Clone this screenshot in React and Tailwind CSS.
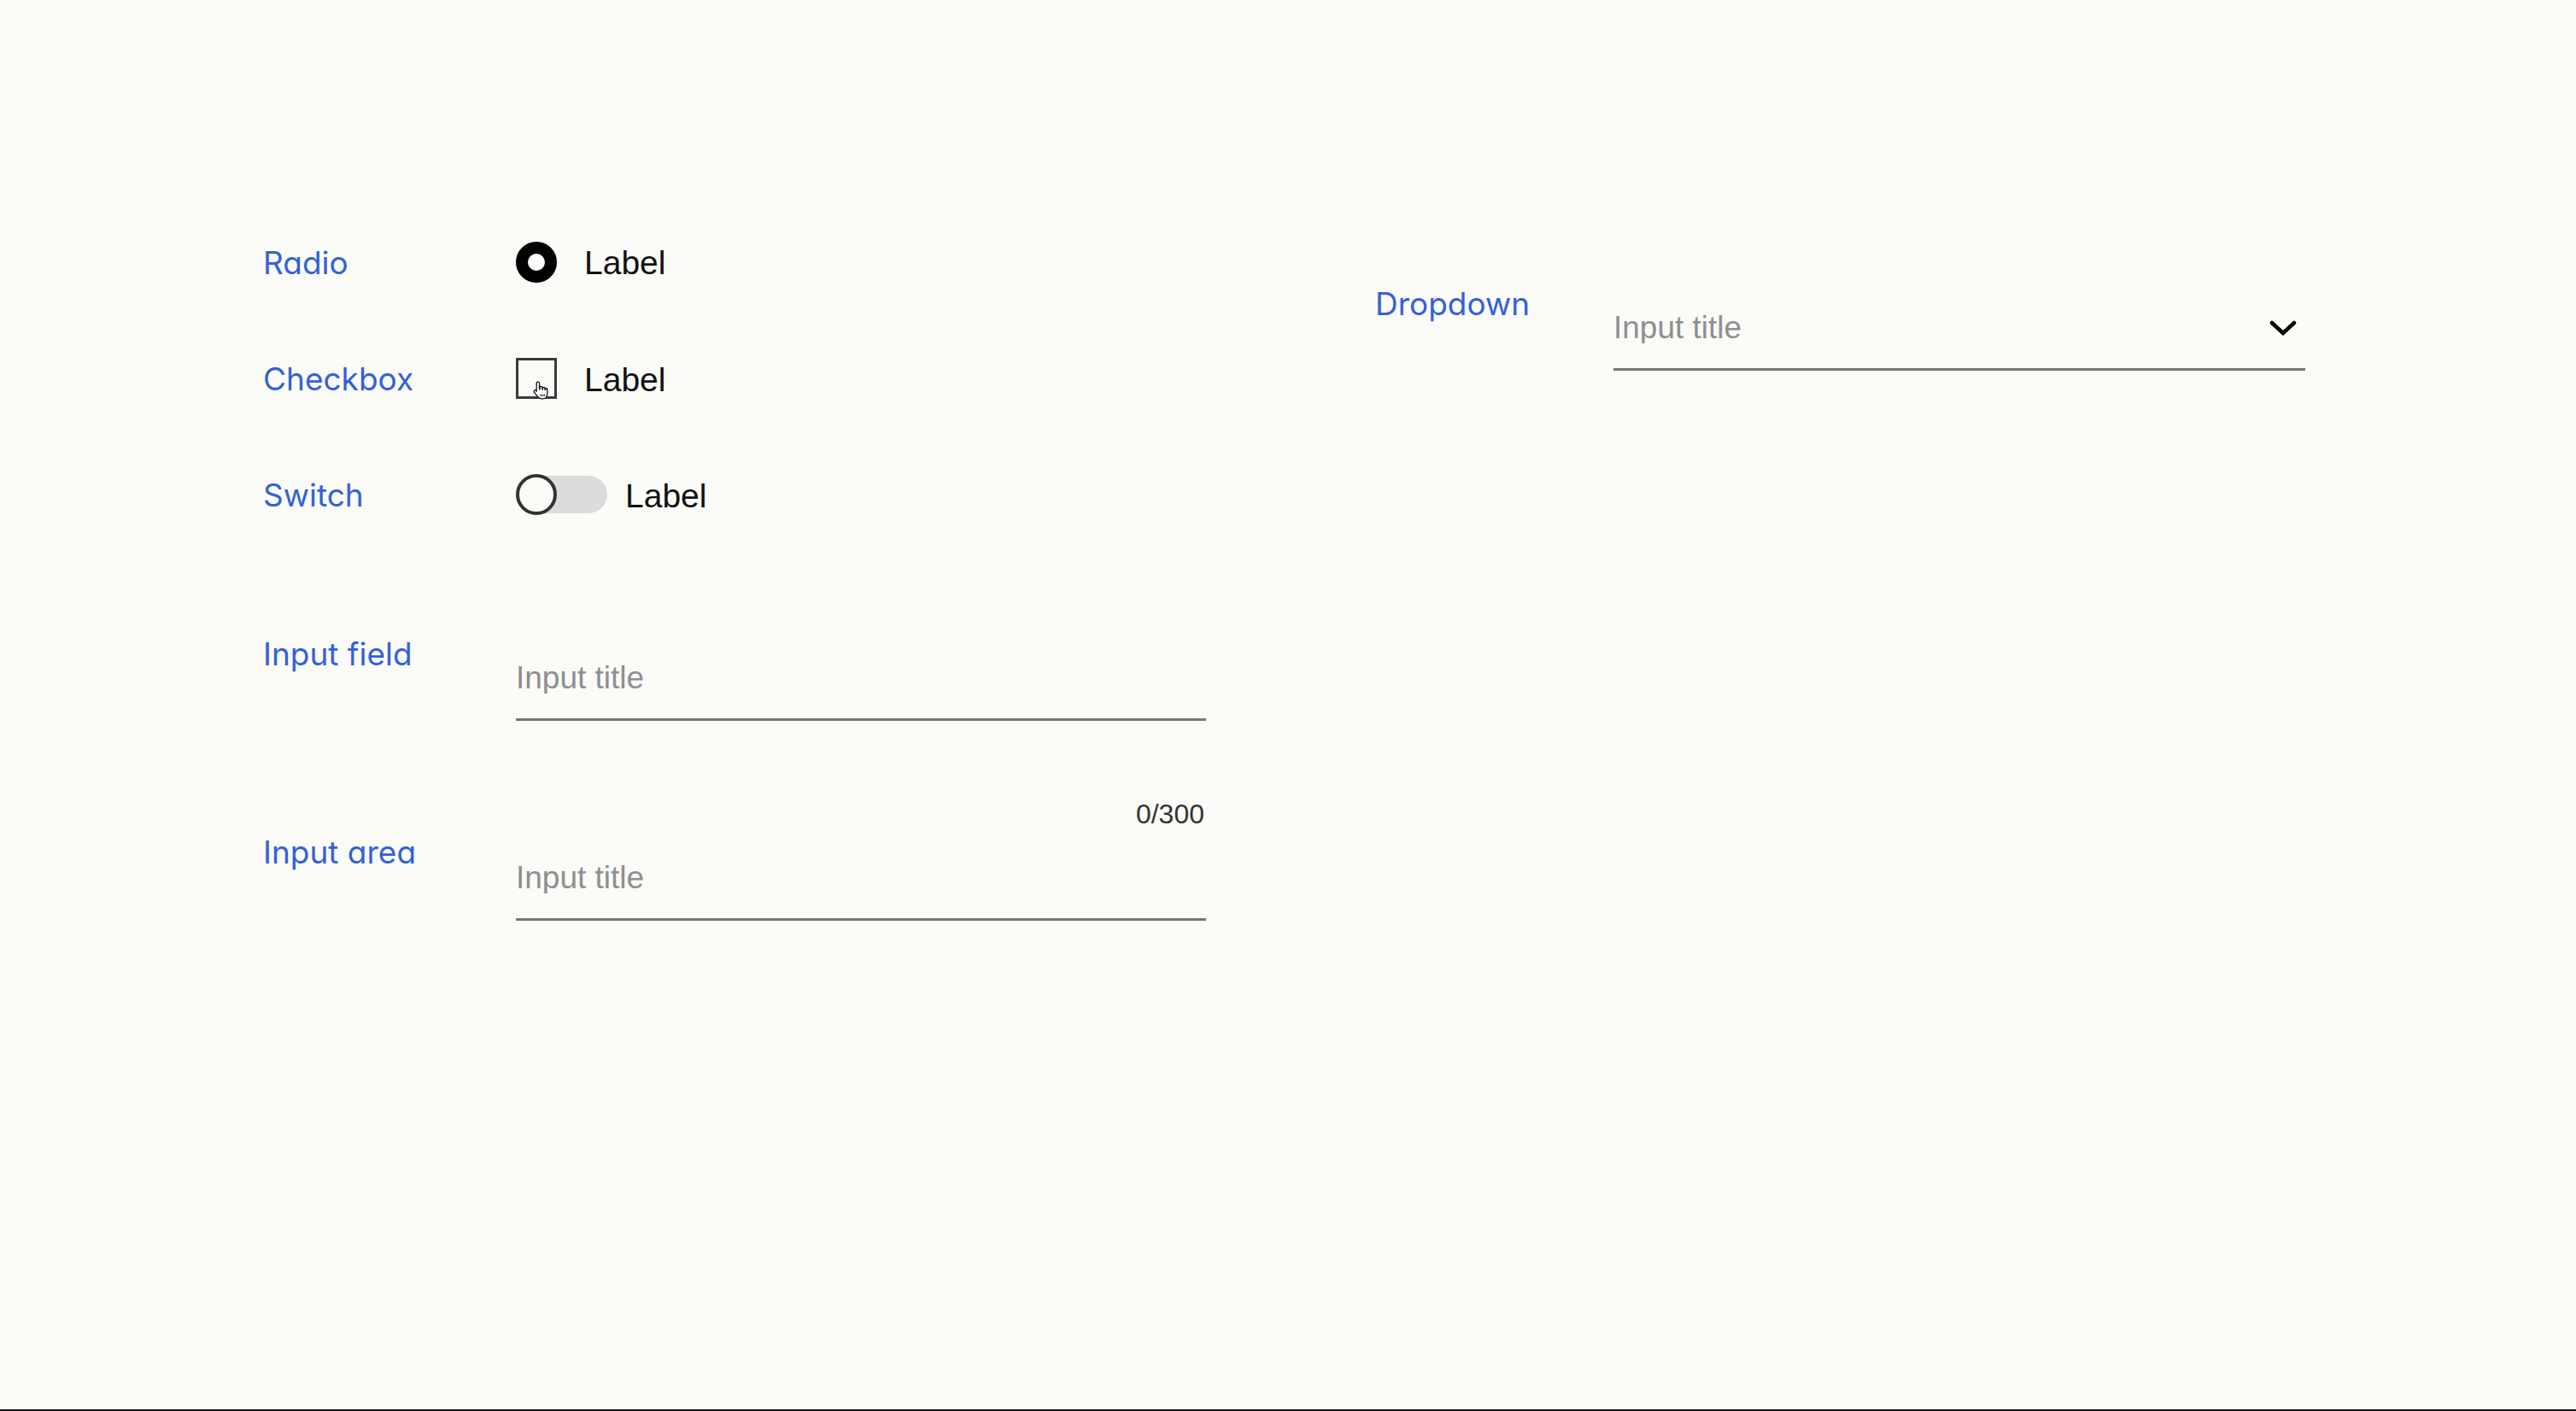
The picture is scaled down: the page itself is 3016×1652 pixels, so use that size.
import React from "react";

const labelCls =
  "shrink-0 font-['Inter',sans-serif] [font-feature-settings:'cv11'] text-[37px] leading-none text-[#3461d6]";

function ControlRow({ label, children }) {
  return (
    <div className="flex h-12 items-center">
      <span className={`${labelCls} w-[296px]`}>{label}</span>
      {children}
    </div>
  );
}

function Radio() {
  return (
    <label className="flex items-center gap-[32px]">
      <span className="h-12 w-12 rounded-full border-[14px] border-black bg-white" />
      <span className="text-[39px] leading-none text-[#111]">Label</span>
    </label>
  );
}

function HandCursor() {
  return (
    <svg
      viewBox="0 0 16 18"
      className="absolute left-[15px] top-[23px] h-[24px] w-[21px]"
    >
      <path
        d="M6 1.5c.8 0 1.3.5 1.3 1.3V8h.4V6.6c0-.7.5-1.1 1.1-1.1s1.1.4 1.1 1.1v1.7h.3v-1c0-.6.5-1 1-1s1 .4 1 1v1.3h.3V8c0-.6.4-.9.9-.9s.9.3.9.9v4c0 2.5-1.6 4.5-4 4.5H9c-1.5 0-2.5-.7-3.3-1.8L2.6 10.6c-.4-.6-.3-1.3.3-1.6.5-.3 1.1-.1 1.5.4l.3.6V2.8c0-.8.5-1.3 1.3-1.3z"
        fill="#fff"
        stroke="#111"
        strokeWidth="1"
        strokeLinejoin="round"
      />
      <path d="M8.4 12.5v2M10 12.5v2M11.6 12.5v2" stroke="#111" strokeWidth=".8" />
    </svg>
  );
}

function Checkbox() {
  return (
    <label className="flex items-center gap-[32px]">
      <span className="relative h-12 w-12 border-[3px] border-[#3a3a3a] bg-[#fbfbf8]">
        <HandCursor />
      </span>
      <span className="mt-[2px] text-[39px] leading-none text-[#111]">Label</span>
    </label>
  );
}

function Switch() {
  return (
    <label className="flex items-center gap-[21px]">
      <span className="relative flex h-12 w-[107px] items-center">
        <span className="h-[44px] w-full rounded-full bg-[#dcdcdc]" />
        <span className="absolute left-0 top-0 h-12 w-12 rounded-full border-4 border-[#333] bg-[#fbfbf8]" />
      </span>
      <span className="mt-[2px] text-[39px] leading-none text-[#111]">Label</span>
    </label>
  );
}

function LineInput({ className = "", trailing = null }) {
  return (
    <div
      className={`flex items-center border-b-[3px] border-[#767676] pb-[29px] ${className}`}
    >
      <input
        type="text"
        placeholder="Input title"
        className="h-[37px] min-w-0 flex-1 bg-transparent p-0 text-[37px] leading-[37px] text-[#111] outline-none placeholder:text-[#8f8f8f]"
      />
      {trailing}
    </div>
  );
}

function Chevron() {
  return (
    <svg viewBox="0 0 32 18" className="mr-[10px] h-[18px] w-[32px]">
      <polyline
        points="3,3 16,15 29,3"
        fill="none"
        stroke="#000"
        strokeWidth="4.5"
        strokeLinecap="round"
        strokeLinejoin="miter"
      />
    </svg>
  );
}

export default function App() {
  return (
    <div className="flex min-h-screen flex-col bg-[#fbfbf8] font-['Liberation_Sans',Arial,sans-serif]">
      <main className="flex flex-1 items-start pl-[308px] pt-[283px]">
        {/* left column: toggles and text inputs */}
        <section className="flex w-[1104px] shrink-0 flex-col">
          <div className="flex flex-col gap-[88px]">
            <ControlRow label="Radio">
              <Radio />
            </ControlRow>
            <ControlRow label="Checkbox">
              <Checkbox />
            </ControlRow>
            <ControlRow label="Switch">
              <Switch />
            </ControlRow>
          </div>

          <div className="mt-[144px] flex items-start">
            <span className={`${labelCls} w-[296px]`}>Input field</span>
            <LineInput className="w-[808px] pt-[28px]" />
          </div>

          <div className="mt-[93px] flex items-start">
            <span className={`${labelCls} mt-[42px] w-[296px]`}>Input area</span>
            <div className="flex w-[808px] flex-col">
              <span className="self-end pr-[2px] text-[32px] leading-none text-[#333]">
                0/300
              </span>
              <LineInput className="mt-[10px] pt-[30px]" />
            </div>
          </div>
        </section>

        {/* right column: dropdown */}
        <section className="ml-[198px] mt-[54px] flex items-start">
          <span className={`${labelCls} w-[279px]`}>Dropdown</span>
          <LineInput className="w-[810px] pt-[28px]" trailing={<Chevron />} />
        </section>
      </main>
      <div className="h-[2px] bg-[#161616]" />
    </div>
  );
}
